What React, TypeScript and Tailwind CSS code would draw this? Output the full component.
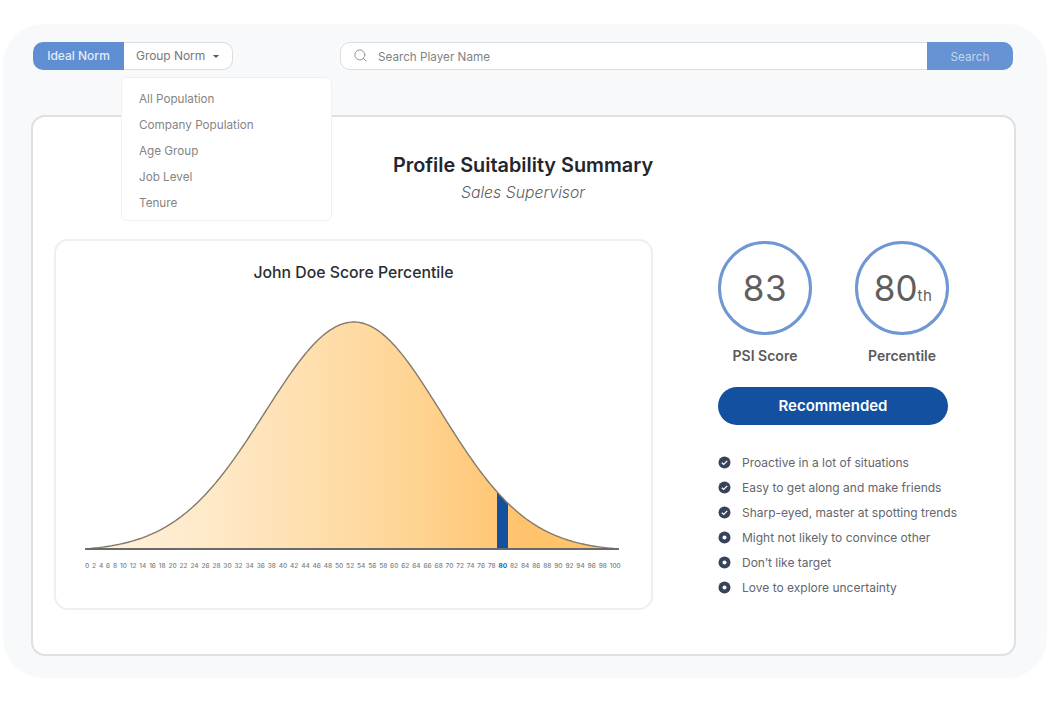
import { Search } from "lucide-react";

const GROUPS = ["All Population", "Company Population", "Age Group", "Job Level", "Tenure"];
const TICKS = Array.from({ length: 51 }, (_, i) => i * 2);
const STRENGTHS = [
  "Proactive in a lot of situations",
  "Easy to get along and make friends",
  "Sharp-eyed, master at spotting trends",
];
const RISKS = ["Might not likely to convince other", "Don’t like target", "Love to explore uncertainty"];

// svg is 536x232, baseline at y=230, peak at x=269. Tails are pulled down so they meet the baseline.
const curveY = (x: number) => {
  const sigma = x < 269 ? 89 : 87;
  const edge = x < 269 ? 269 : 265;
  const tail = Math.exp(-(edge ** 2) / (2 * sigma * sigma));
  const g = Math.exp(-((x - 269) ** 2) / (2 * sigma * sigma));
  return 230 - 227 * Math.max(0, (g - tail) / (1 - tail));
};

function curvePoints(from: number, to: number) {
  const pts: string[] = [];
  for (let x = from; x <= to; x += 2) pts.push(`${x} ${curveY(x).toFixed(2)}`);
  return pts;
}

function BellCurve() {
  const line = "M" + curvePoints(0, 534).join(" L");
  const band = `M412 230 L${curvePoints(412, 422).join(" L")} L423 ${curveY(423).toFixed(2)} L423 230 Z`;
  return (
    <svg width="536" height="232" viewBox="0 0 536 232" className="block">
      <defs>
        <linearGradient id="fill" x1="0" x2="1" y1="0" y2="0">
          <stop offset="0" stopColor="#fff3e0" />
          <stop offset="0.25" stopColor="#fee8c6" />
          <stop offset="0.6" stopColor="#ffd595" />
          <stop offset="0.82" stopColor="#ffc36d" />
          <stop offset="1" stopColor="#ffc468" />
        </linearGradient>
      </defs>
      <path d={`${line} L534 230 L0 230 Z`} fill="url(#fill)" />
      <path d={band} fill="#13509f" />
      <path d={line} fill="none" stroke="#857a68" strokeWidth="1.4" />
      <path d="M0 230 H534" stroke="#6a6a6a" strokeWidth="1.8" />
    </svg>
  );
}

function CheckDot() {
  return (
    <svg width="13" height="13" viewBox="0 0 13 13" className="shrink-0">
      <circle cx="6.5" cy="6.5" r="6" fill="#36435a" />
      <path d="M3.8 6.7 5.7 8.4 9.2 4.9" fill="none" stroke="#fff" strokeWidth="1.3" />
    </svg>
  );
}

function RingDot() {
  return (
    <svg width="13" height="13" viewBox="0 0 13 13" className="shrink-0">
      <circle cx="6.5" cy="6.5" r="6" fill="#36435a" />
      <circle cx="6.5" cy="6.5" r="2" fill="#fff" />
    </svg>
  );
}

function Stat({ value, suffix, label }: { value: string; suffix?: string; label: string }) {
  return (
    <div className="w-[94px] flex flex-col items-center">
      <div className="w-[94px] h-[94px] rounded-full border-[3px] border-[#6e97d3] bg-white flex items-center justify-center text-[#5f5f5f]">
        <span className={`text-[35px] leading-none ${suffix ? "ml-[2px]" : "tracking-[0.5px]"}`}>{value}</span>
        {suffix && <span className="text-[15px] leading-none mt-[14px] tracking-[0.5px]">{suffix}</span>}
      </div>
      <div className="mt-[11px] text-[14px] leading-[20px] font-semibold text-[#5a5a5a] whitespace-nowrap">{label}</div>
    </div>
  );
}

function Toolbar() {
  return (
    <div className="flex items-center h-[28px]">
      <div className="relative flex w-[200px] h-[28px] ml-[2px] text-[12px]">
        <div className="w-[91px] rounded-l-[10px] bg-[#5f8fd2] text-[#e3ecf9] font-medium flex items-center justify-center">
          Ideal Norm
        </div>
        <div className="flex-1 rounded-r-[10px] border border-l-0 border-[#dcdddf] bg-white text-[#777] flex items-center pl-[12px] tracking-[-0.05px]">
          Group Norm
          <span className="ml-[8px] mt-[1px] border-x-[3px] border-t-[3px] border-x-transparent border-t-[#555]" />
        </div>
        <div className="absolute z-10 left-[88px] top-[35px] w-[211px] h-[144px] rounded-[6px] border border-[#f0f1f3] bg-white pl-[17px] pt-[8px] text-[11.7px] text-[#858585]">
          {GROUPS.map(g => (
            <div key={g} className="h-[26px] leading-[26px] whitespace-nowrap">{g}</div>
          ))}
        </div>
      </div>
      <div className="ml-[107px] w-[673px] h-[28px] flex rounded-[10px] border border-[#dcdddf] bg-white text-[11.7px]">
        <div className="flex-1 flex items-center pl-[12px] text-[#828282]">
          <Search className="w-[15px] h-[15px] text-[#959595] mr-[10px] -mt-[1px]" strokeWidth={1.6} />
          <span className="pt-[3px]">Search Player Name</span>
        </div>
        <div className="w-[86px] -my-px -mr-px pt-[3px] rounded-r-[10px] bg-[#6593d3] text-[#c3d6ef] flex items-center justify-center">
          Search
        </div>
      </div>
    </div>
  );
}

export default function App() {
  return (
    <div className="w-[1048px] h-[706px] bg-white pt-[24px] pl-[3px] overflow-hidden font-['Inter',sans-serif]">
      <div className="w-[1044px] h-[654px] rounded-[40px] bg-[#f8f9fb] pl-[28px] pt-[18px]">
        <Toolbar />
        <div className="mt-[45px] w-[985px] h-[541px] rounded-[14px] border-2 border-[#dfe0e2] bg-white pl-[21px] pt-[34px]">
          <div className="w-[938px] text-center">
            <h1 className="text-[19.85px] leading-[28px] font-semibold text-[#23262b]">Profile Suitability Summary</h1>
            <p className="mt-[2px] text-[15.8px] leading-[24px] italic font-light text-[#5f5f5f]">Sales Supervisor</p>
          </div>
          <div className="mt-[34px] flex">
            <div className="w-[599px] h-[371px] rounded-[14px] border-2 border-[#eeeff1] bg-white pl-[29px] pt-[20px]">
              <h2 className="w-[537px] text-center text-[15.8px] leading-[24px] font-medium text-[#2b2d31]">
                John Doe Score Percentile
              </h2>
              <div className="mt-[34px]">
                <BellCurve />
              </div>
              <div className="w-[536px] mt-[10px] flex justify-between text-[6.5px] leading-[10px] font-medium text-[#808080]">
                {TICKS.map(t => (
                  <span key={t} className={t === 80 ? "text-[#1f5cae] font-bold" : ""}>{t}</span>
                ))}
              </div>
            </div>
            <div className="ml-[65px] w-[280px] pt-[2px]">
              <div className="w-[231px] flex justify-between">
                <Stat value="83" label="PSI Score" />
                <Stat value="80" suffix="th" label="Percentile" />
              </div>
              <div className="mt-[21px] w-[230px] h-[38px] rounded-full bg-[#13509f] text-white text-[15px] font-semibold flex items-center justify-center">
                Recommended
              </div>
              <ul className="mt-[25px] text-[12px] text-[#62666d]">
                {STRENGTHS.map(s => (
                  <li key={s} className="h-[25px] flex items-center gap-[11px] whitespace-nowrap">
                    <CheckDot />
                    {s}
                  </li>
                ))}
                {RISKS.map(s => (
                  <li key={s} className="h-[25px] flex items-center gap-[11px] whitespace-nowrap">
                    <RingDot />
                    {s}
                  </li>
                ))}
              </ul>
            </div>
          </div>
        </div>
      </div>
    </div>
  );
}
